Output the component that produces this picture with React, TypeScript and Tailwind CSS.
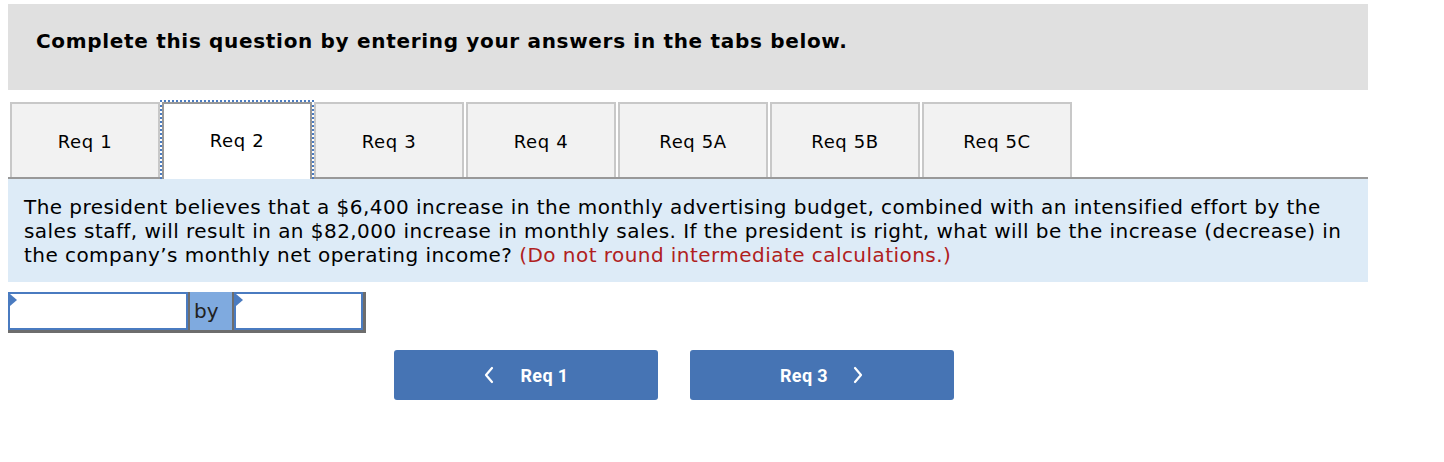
import React from 'react';

const tabs = ['Req 1', 'Req 2', 'Req 3', 'Req 4', 'Req 5A', 'Req 5B', 'Req 5C'];

function Chevron({ dir }: { dir: 'left' | 'right' }) {
  return (
    <svg width="12" height="18" viewBox="0 0 12 18" fill="none" stroke="white" strokeWidth="2.2" strokeLinecap="round" strokeLinejoin="round">
      {dir === 'left' ? <path d="M9 2 L3 9 L9 16" /> : <path d="M3 2 L9 9 L3 16" />}
    </svg>
  );
}

function Corner() {
  return <span className="absolute left-0 top-0 w-0 h-0 border-t-[6px] border-b-[6px] border-l-[7px] border-t-transparent border-b-transparent border-l-[#4a7bc0]" />;
}

export default function App() {
  const active = 1;
  return (
    <div className="w-[1444px] h-[462px] bg-white pt-1 font-['DejaVu_Sans',Verdana,sans-serif] text-black">
      <div className="ml-2 w-[1360px] h-[86px] bg-[#e0e0e0] pl-7 pt-[23px]">
        <h1 className="text-[20px] leading-[28px] font-bold tracking-[0.68px]">Complete this question by entering your answers in the tabs below.</h1>
      </div>

      <div className="ml-2 w-[1360px] mt-[12px]">
        <div className="flex gap-[2px] pl-[2px] h-[75px]">
          {tabs.map((t, i) =>
            i === active ? (
              <div key={t} className="-mx-[2px] -mt-[2px] h-[79px] border-2 border-b-0 border-dotted border-[#4a7bc0] relative z-10">
                <div className="w-[150px] h-full bg-white border-2 border-b-0 border-[#999] flex items-center justify-center text-[18px] tracking-[0.6px] pb-[2px]">
                  {t}
                </div>
              </div>
            ) : (
              <div key={t} className="w-[150px] h-[75px] bg-[#f2f2f2] border-2 border-b-0 border-[#c8c8c8] flex items-center justify-center text-[18px] tracking-[0.6px] pt-[2px]">
                {t}
              </div>
            )
          )}
        </div>
        <div className="bg-[#ddebf7] border-t-2 border-[#999] px-4 pt-[16px] pb-[15px] text-[20px] leading-[24px] tracking-[0.45px]">
          The president believes that a $6,400 increase in the monthly advertising budget, combined with an intensified effort by the sales staff, will result in an $82,000 increase in monthly sales. If the president is right, what will be the increase (decrease) in the company’s monthly net operating income?{' '}
          <span className="text-[#b02020]">(Do not round intermediate calculations.)</span>
        </div>
      </div>

      <div className="ml-2 mt-[10px] flex w-[358px] h-[41px] border-b-[3px] border-r-[3px] border-[#6d6d6d]">
        <div className="relative w-[180px] h-full bg-white border-2 border-[#4a7bc0]">
          <Corner />
        </div>
        <div className="w-[46px] h-full bg-[#7faadf] border-x-[2px] border-[#6d6d6d] flex items-center pl-1 text-[20px] text-[#222]">by</div>
        <div className="relative flex-1 h-full bg-white border-2 border-[#4a7bc0]">
          <Corner />
        </div>
      </div>

      <div className="flex gap-[32px] ml-[394px] mt-[17px] font-['Roboto',sans-serif]">
        <button className="w-[264px] h-[50px] rounded-[3px] bg-[#4674b4] text-white font-bold text-[18px] tracking-[0.4px] flex items-center justify-center gap-[25px]">
          <Chevron dir="left" />
          <span>Req 1</span>
        </button>
        <button className="w-[264px] h-[50px] rounded-[3px] bg-[#4674b4] text-white font-bold text-[18px] tracking-[0.4px] flex items-center justify-center gap-[24px]">
          <span>Req 3</span>
          <Chevron dir="right" />
        </button>
      </div>
    </div>
  );
}
